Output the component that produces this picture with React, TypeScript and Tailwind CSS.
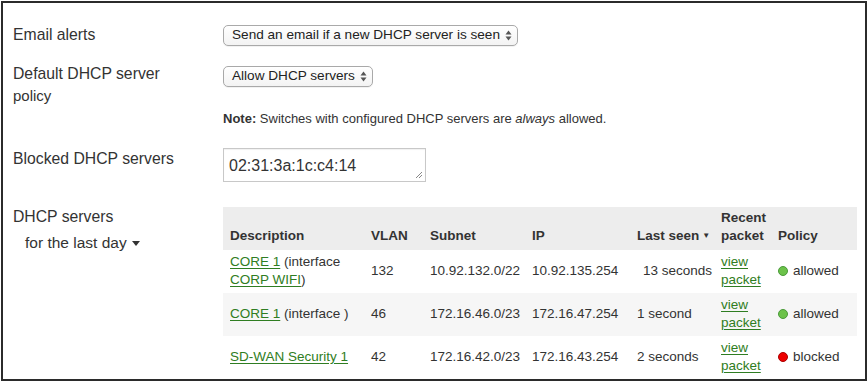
import React from "react";

type Row = {
  name: string;
  iface: string;
  ifaceLink?: string;
  vlan: string;
  subnet: string;
  ip: string;
  seen: string;
  policy: "allowed" | "blocked";
  shade: boolean;
};

const rows: Row[] = [
  { name: "CORE 1", iface: "(interface", ifaceLink: "CORP WIFI", vlan: "132", subnet: "10.92.132.0/22", ip: "10.92.135.254", seen: "13 seconds", policy: "allowed", shade: false },
  { name: "CORE 1", iface: "(interface )", vlan: "46", subnet: "172.16.46.0/23", ip: "172.16.47.254", seen: "1 second", policy: "allowed", shade: true },
  { name: "SD-WAN Security 1", iface: "", vlan: "42", subnet: "172.16.42.0/23", ip: "172.16.43.254", seen: "2 seconds", policy: "blocked", shade: false },
];

const SelectArrows = () => (
  <svg width="7" height="11" viewBox="0 0 7 11" className="ml-[5px]">
    <path d="M3.5 0.5 L6.5 4.5 H0.5 Z" fill="#555" />
    <path d="M3.5 10.5 L6.5 6.5 H0.5 Z" fill="#555" />
  </svg>
);

const FakeSelect = ({ label }: { label: string }) => (
  <div className="inline-flex h-[21px] items-center rounded-[5px] border border-[#a9a9a9] bg-gradient-to-b from-white to-[#f3f3f3] pl-[8px] pr-[5px] text-[13.6px] text-[#222] shadow-[0_1px_0_rgba(0,0,0,0.05)]">
    {label}
    <SelectArrows />
  </div>
);

const Label = ({ children, className = "" }: { children: React.ReactNode; className?: string }) => (
  <div className={`w-[210px] shrink-0 text-[15.75px] leading-[22px] text-[#333] ${className}`}>{children}</div>
);

const link = "text-[#2f7d22] underline underline-offset-2";

export default function App() {
  return (
    <div className="h-[382px] w-[868px] overflow-hidden bg-white p-px" style={{ fontFamily: '"Liberation Sans", Arial, sans-serif' }}>
      <div className="h-[380px] w-[866px] overflow-hidden border-2 border-[#2b2b2b] bg-white pl-[10px]">
        <div className="mt-[21px] flex items-center">
          <Label>Email alerts</Label>
          <FakeSelect label="Send an email if a new DHCP server is seen" />
        </div>

        <div className="mt-[17px] flex">
          <Label>
            <div>Default DHCP server</div>
            <div className="text-[15px]">policy</div>
          </Label>
          <div>
            <FakeSelect label="Allow DHCP servers" />
            <div className="mt-[22px] text-[13px] text-[#333]">
              <span className="font-bold">Note:</span> Switches with configured DHCP servers are <i>always</i> allowed.
            </div>
          </div>
        </div>

        <div className="mt-[19px] flex">
          <Label>Blocked DHCP servers</Label>
          <div className="relative h-[34px] w-[203px] border border-[#c8c8c8] px-[5px] pt-[5px] text-[16px] text-[#333] shadow-[inset_0_1px_1px_rgba(0,0,0,0.06)]">
            02:31:3a:1c:c4:14
            <svg width="8" height="8" viewBox="0 0 8 8" className="absolute bottom-[2px] right-[2px]">
              <path d="M7 1 L1 7 M7 4 L4 7" stroke="#888" strokeWidth="1" />
            </svg>
          </div>
        </div>

        <div className="mt-[25px] flex">
          <Label>
            <div className="mt-[-1px]">DHCP servers</div>
            <div className="mt-[4px] flex items-center pl-[12px] text-[15.5px]">
              for the last day
              <svg width="8" height="5" viewBox="0 0 8 5" className="ml-[5px] mt-[2px]">
                <path d="M0 0 H8 L4 5 Z" fill="#333" />
              </svg>
            </div>
          </Label>
          <table className="w-[634px] table-fixed border-collapse text-[13.5px] text-[#333]">
            <colgroup>
              <col className="w-[141px]" />
              <col className="w-[59px]" />
              <col className="w-[102px]" />
              <col className="w-[105px]" />
              <col className="w-[84px]" />
              <col className="w-[57px]" />
              <col className="w-[86px]" />
            </colgroup>
            <thead>
              <tr className="h-[43px] bg-[#ededed] text-left align-bottom font-bold">
                <th className="pb-[5px] pl-[7px] leading-[18px]">Description</th>
                <th className="pb-[5px] pl-[7px] leading-[18px]">VLAN</th>
                <th className="pb-[5px] pl-[7px] leading-[18px]">Subnet</th>
                <th className="pb-[5px] pl-[7px] leading-[18px]">IP</th>
                <th className="pb-[5px] pl-[7px] leading-[18px]">
                  Last seen<span className="ml-[3px] align-top text-[8px]">▼</span>
                </th>
                <th className="pb-[5px] pl-[7px] leading-[18px]">Recent<br />packet</th>
                <th className="pb-[5px] pl-[7px] leading-[18px]">Policy</th>
              </tr>
            </thead>
            <tbody>
              {rows.map((r, i) => (
                <tr key={i} className={`h-[43px] align-middle leading-[18px] ${r.shade ? "bg-[#f6f6f6]" : "bg-white"}`}>
                  <td className="pl-[7px]">
                    <a className={link}>{r.name}</a> {r.iface}
                    {r.ifaceLink && (
                      <>
                        <br />
                        <a className={link}>{r.ifaceLink}</a>)
                      </>
                    )}
                  </td>
                  <td className="pl-[7px]">{r.vlan}</td>
                  <td className="pl-[7px]">{r.subnet}</td>
                  <td className="pl-[7px]">{r.ip}</td>
                  <td className={i === 0 ? "pl-[13px]" : "pl-[7px]"}>{r.seen}</td>
                  <td className="pl-[7px]">
                    <a className={link}>view<br />packet</a>
                  </td>
                  <td className="pl-[7px]">
                    <span className="inline-flex items-center gap-[5px]">
                      <span
                        className={`inline-block h-[10px] w-[10px] rounded-full border ${
                          r.policy === "allowed" ? "border-[#4a9a3a] bg-[#6cc24a]" : "border-[#a00] bg-[#e00]"
                        }`}
                      />
                      {r.policy}
                    </span>
                  </td>
                </tr>
              ))}
            </tbody>
          </table>
        </div>
      </div>
    </div>
  );
}
